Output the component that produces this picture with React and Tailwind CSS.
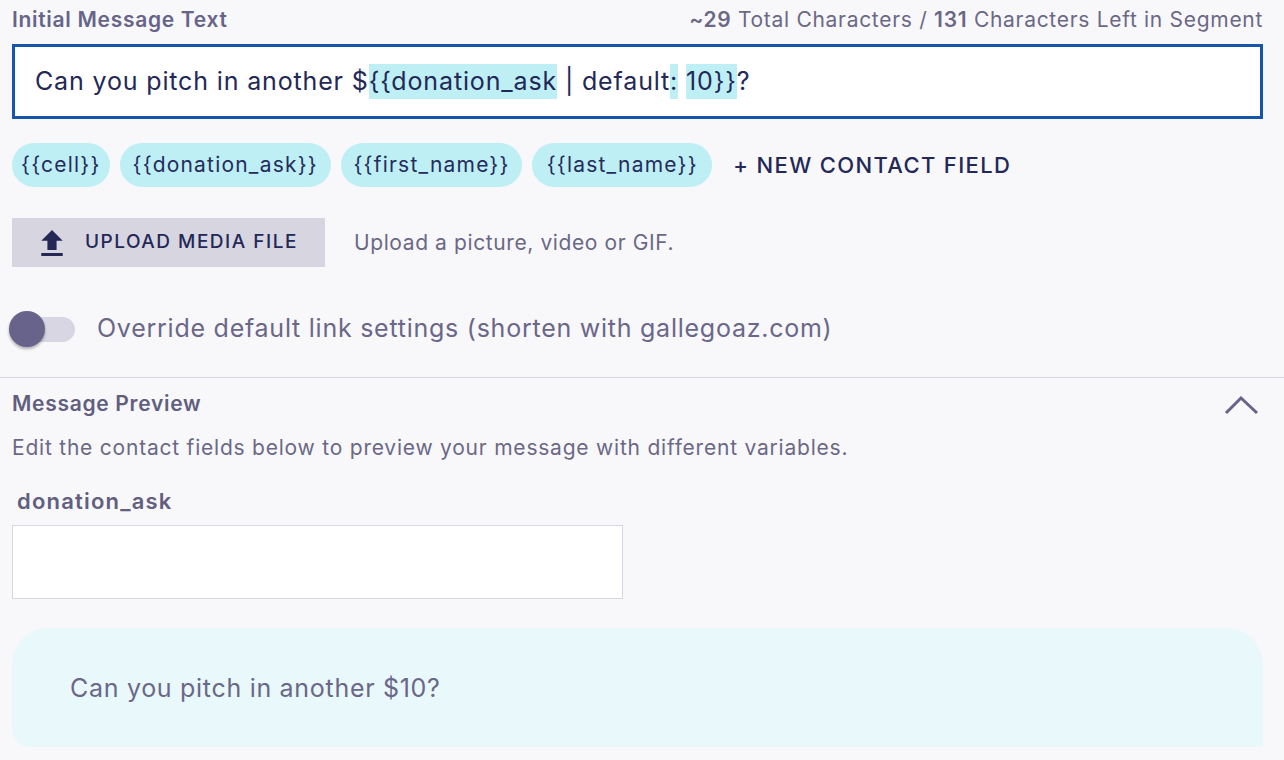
import React from "react";

const font = { fontFamily: "Inter, 'Noto Sans', sans-serif" };

function Chip({ children, px = "px-[13px]" }) {
  return (
    <span className={"inline-flex h-[44px] items-center rounded-full bg-[#bdeff5] text-[21px] tracking-[1.2px] text-[#262b5c] " + px}>
      {children}
    </span>
  );
}

export default function App() {
  return (
    <div className="min-h-[760px] w-[1284px] overflow-hidden bg-[#f8f8fb]" style={font}>
      <div className="pl-[12px] pr-[21px]">
        <div className="flex h-[44px] items-center justify-between pb-[4px]">
          <span className="text-[21px] font-semibold tracking-[0.7px] text-[#67648a]">Initial Message Text</span>
          <span className="text-[21px] tracking-[0.7px] text-[#6b6886]">
            <span className="font-semibold">~29</span> Total Characters / <span className="font-semibold">131</span> Characters Left in Segment
          </span>
        </div>
        <div className="flex h-[75px] items-center border-[3px] border-[#1655ad] bg-white pl-[20px] text-[25px] tracking-[0.85px] text-[#232857]">
          <span>Can you pitch in another $</span>
          <span className="bg-[#bdeff5] leading-[35px]">{"{{donation_ask"}</span>
          <span className="whitespace-pre">{" | default"}</span>
          <span className="bg-[#bdeff5] leading-[35px]">:</span>
          <span className="whitespace-pre"> </span>
          <span className="bg-[#bdeff5] leading-[35px]">{"10}}"}</span>
          <span>?</span>
        </div>
        <div className="mt-[24px] flex items-center gap-[10px]">
          <Chip px="px-[9px]">{"{{cell}}"}</Chip>
          <Chip>{"{{donation_ask}}"}</Chip>
          <Chip px="px-[12.5px]">{"{{first_name}}"}</Chip>
          <Chip px="px-[14.5px]">{"{{last_name}}"}</Chip>
          <span className="ml-[11px] text-[22px] font-medium tracking-[1.35px] text-[#232857]">+ NEW CONTACT FIELD</span>
        </div>
        <div className="mt-[31px] flex items-center">
          <div className="flex h-[49px] w-[313px] items-center bg-[#d7d5e0] pl-[29px]">
            <svg width="22" height="26" viewBox="5 3 14 17" fill="#232857">
              <path d="M9 16h6v-6h4l-7-7-7 7h4zm-4 2h14v2H5z" />
            </svg>
            <span className="ml-[22px] text-[19px] font-medium tracking-[1.5px] text-[#232857]">UPLOAD MEDIA FILE</span>
          </div>
          <span className="ml-[29px] text-[21px] tracking-[0.6px] text-[#6b6886]">Upload a picture, video or GIF.</span>
        </div>
      </div>
      <div className="mt-[44px] flex h-[36px] items-center pl-[9px]">
        <div className="relative h-[36px] w-[66px]">
          <div className="absolute left-0 right-0 top-[6px] h-[25px] rounded-full bg-[#d8d6e2]" />
          <div className="absolute left-0 top-0 h-[36px] w-[36px] rounded-full bg-[#67638a] shadow-[0_2px_3px_rgba(0,0,0,0.3)]" />
        </div>
        <span className="ml-[22px] text-[25px] tracking-[0.75px] text-[#6a6788]">Override default link settings (shorten with gallegoaz.com)</span>
      </div>
      <div className="mt-[30px] h-px bg-[#d8d6e2]" />
      <div className="pl-[12px] pr-[21px]">
        <div className="flex h-[50px] items-center justify-between pt-[2px]">
          <span className="text-[21px] font-semibold tracking-[0.7px] text-[#625f7e]">Message Preview</span>
          <svg width="36" height="22" viewBox="0 0 36 22" className="mr-[3px] mt-[4px]">
            <polyline points="2,18 17,3 33,18" fill="none" stroke="#67638a" strokeWidth="3" />
          </svg>
        </div>
        <div className="flex h-[40px] items-center text-[21px] tracking-[0.78px] text-[#6b6886]">
          Edit the contact fields below to preview your message with different variables.
        </div>
        <div className="mt-[21px] flex h-[24px] items-center pl-[5px] text-[22px] font-semibold tracking-[1.2px] text-[#625f7e]">donation_ask</div>
        <div className="mt-[12px] h-[74px] w-[611px] border border-[#d8d6e2] bg-white" />
        <div className="mt-[29px] flex h-[119px] items-center rounded-t-[36px] rounded-bl-[18px] bg-[#e9f8fa] pl-[58px] pt-[2px] text-[25px] tracking-[0.7px] text-[#6a6788]">
          Can you pitch in another $10?
        </div>
      </div>
    </div>
  );
}
